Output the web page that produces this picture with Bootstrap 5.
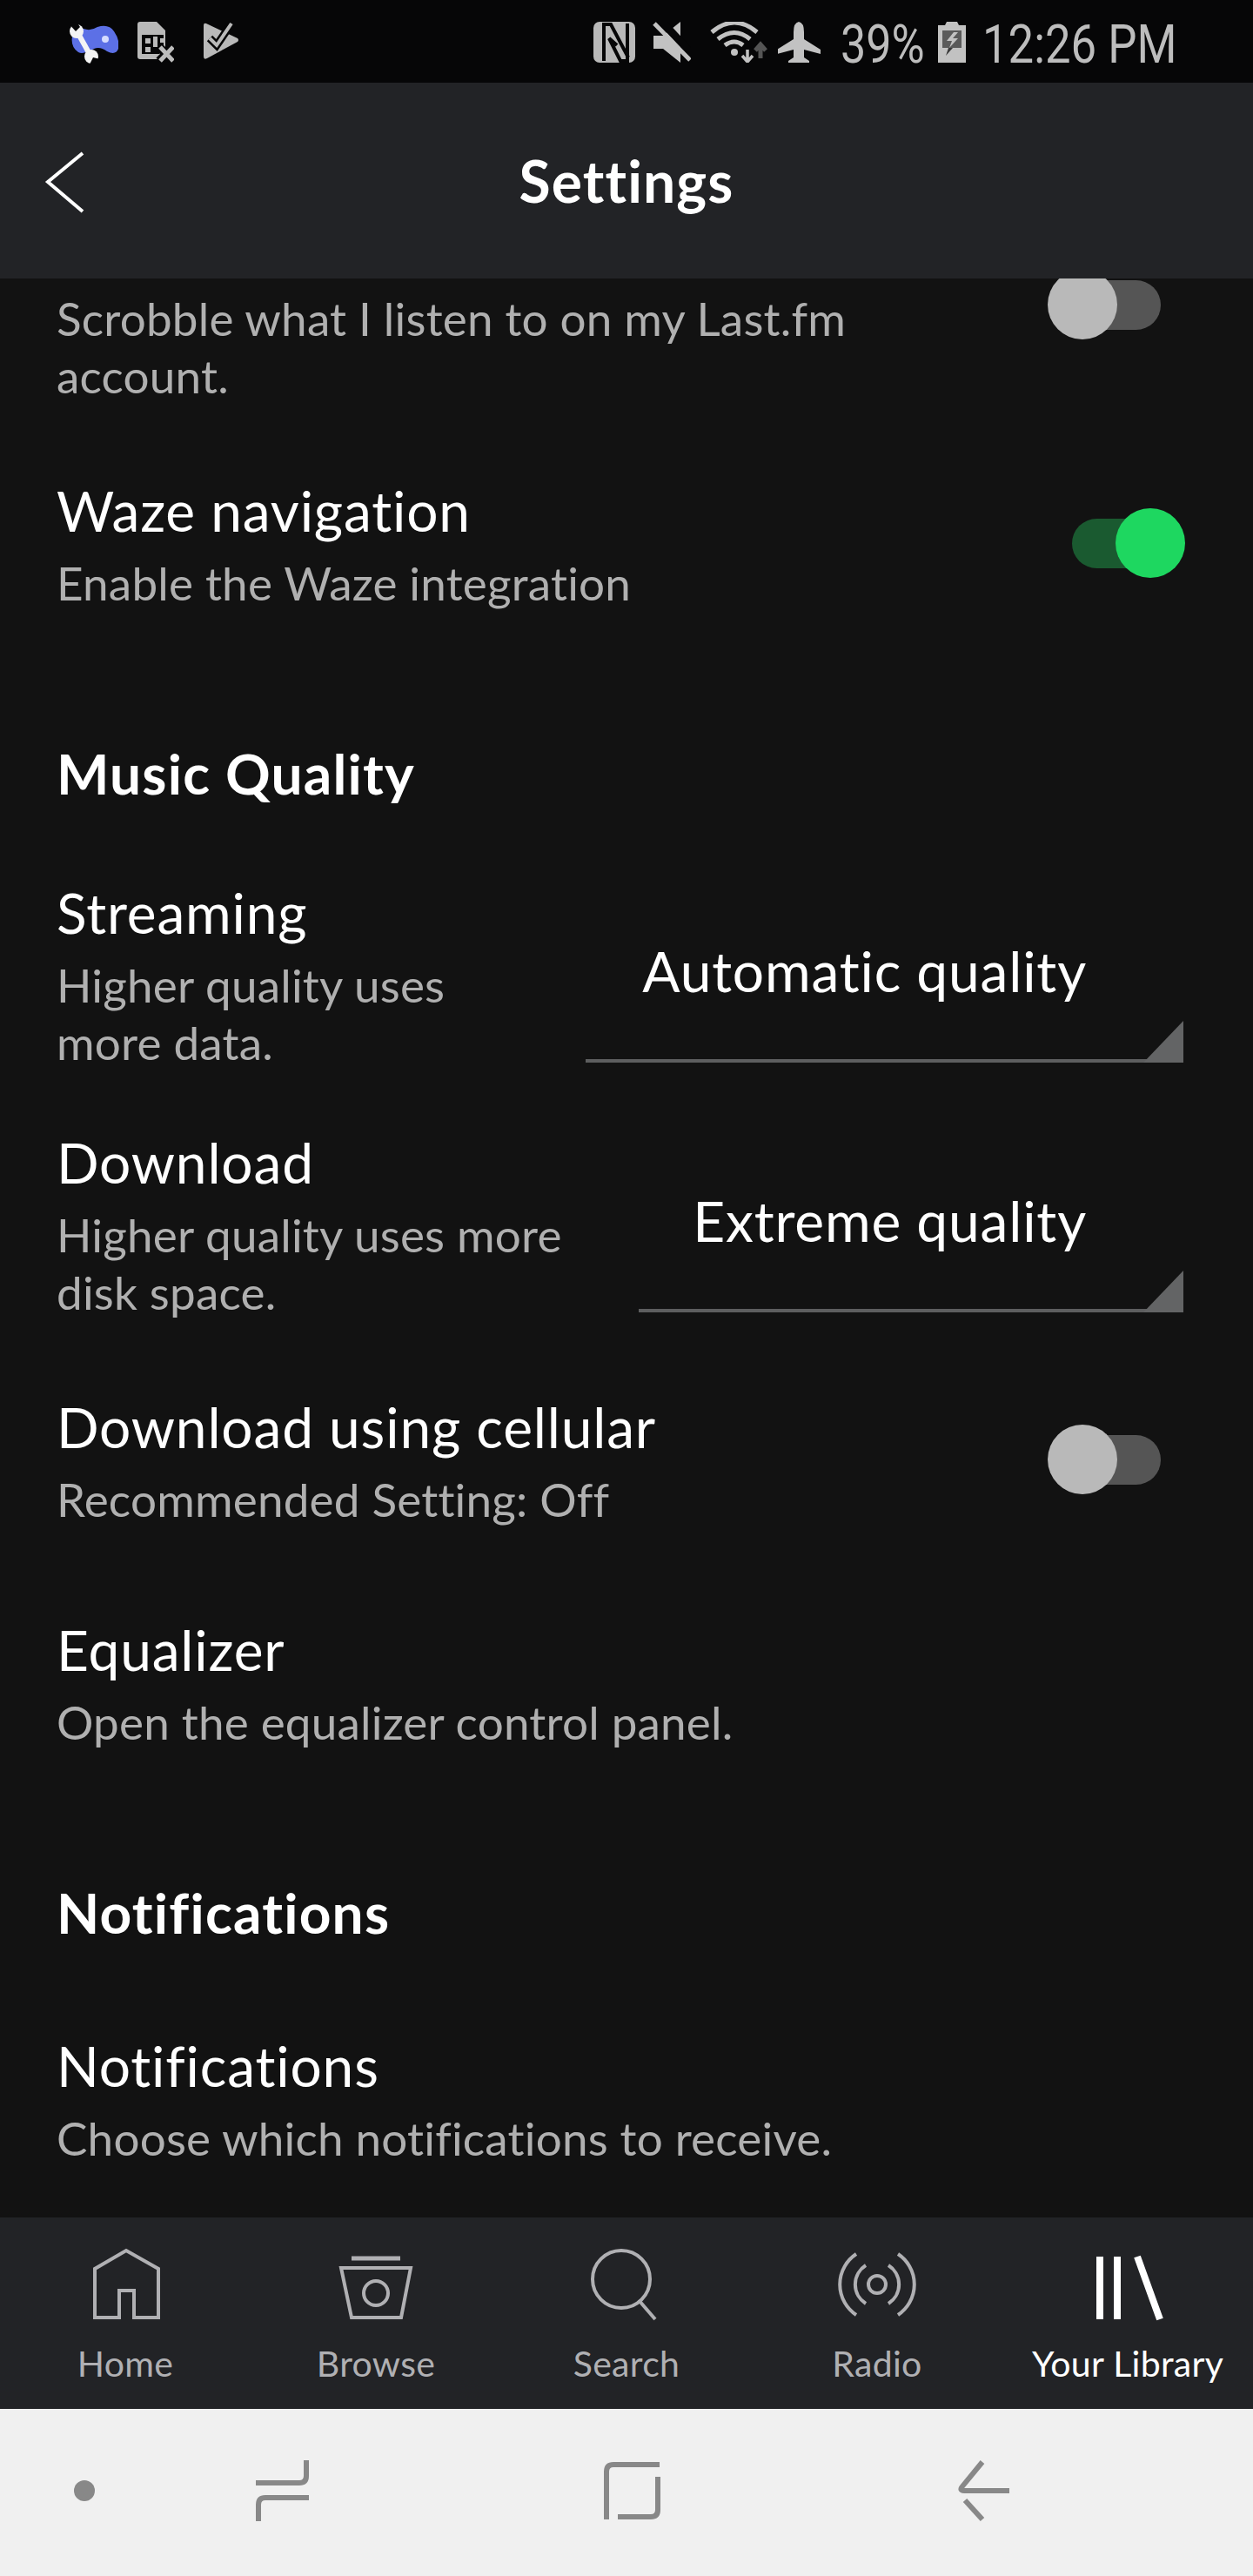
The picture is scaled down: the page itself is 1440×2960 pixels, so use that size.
<!DOCTYPE html>
<html lang="en">
<head>
<meta charset="utf-8">
<title>Settings</title>
<link href="https://cdn.jsdelivr.net/npm/bootstrap@5.3.0/dist/css/bootstrap.min.css" rel="stylesheet">
<style>
html,body{margin:0;background:#121212}
body{font-family:"Lato","Liberation Sans",sans-serif;width:1440px;height:2960px;overflow:hidden;color:#fff}
.phone{width:1440px;height:2960px}
.status-strip{height:95px;background:#060607;color:#bdbdbd;flex:none}
.status-strip svg{display:block;flex:none}
.stat-left{padding:25px 0 0 80px;gap:22px}
.stat-right{padding:25px 91px 0 0}
.ml-11{margin-left:11px}.ml-12{margin-left:12px}.ml-18{margin-left:18px}.ml-19{margin-left:19px}.ml-20{margin-left:20px}.ml-22{margin-left:22px}
.stat-text{font-family:"Roboto",sans-serif;font-weight:400;font-size:62px;line-height:62px;white-space:nowrap;transform-origin:left center;letter-spacing:0}
.stat-pct{width:94px;transform:scaleX(.84);margin-top:-5px}
.stat-time{width:220px;transform:scaleX(.85);margin-top:-5px}
.top-head{height:225px;background:#222326;flex:none;position:relative}
.top-title{font-size:66px;font-weight:700;line-height:1;letter-spacing:1.1px}
.back-ico{position:absolute;left:50px;top:74px}
.scroll-pane{height:2228px;overflow:hidden;background:#121212;padding:13px 80px 0 65px;flex:none}
.item-title{font-size:64px;line-height:100px;color:#fff;letter-spacing:.85px}
.item-desc{font-size:53px;line-height:66px;color:#b0b0b0;letter-spacing:.2px}
.group-head{font-size:64px;font-weight:700;line-height:100px;color:#fff;letter-spacing:1.2px}
.gap72{margin-top:72px}.gap136{margin-top:136px}.gap60{margin-top:60px}.gap55{margin-top:55px}.gap90{margin-top:90px}.gap76{margin-top:76px}
.switch-box{width:130px;height:80px;position:relative;flex:none}
.switch-track{position:absolute;left:30px;top:12px;width:100px;height:57px;border-radius:29px;background:#555}
.switch-knob{position:absolute;left:0;top:0;width:80px;height:80px;border-radius:50%;background:#b9b9b9}
.switch-box.is-on{margin-right:-2px;margin-top:8px}
.switch-box.is-on .switch-track{left:0;background:#1a5a30}
.switch-box.is-on .switch-knob{left:50px;background:#1ed760}
.switch-box.is-off{margin-right:26px}
.switch-clip{margin-top:-23px}
.switch-low{margin-top:8px}
.drop-pick{position:relative;border-bottom:4px solid #5d5e5f;height:174px;padding-right:111px;font-size:64px;line-height:72px;letter-spacing:.85px;text-align:right;flex:none;padding-top:33px}
.drop-pick::after{content:"";position:absolute;right:0;bottom:-4px;width:46px;height:48px;background:#636465;clip-path:polygon(100% 0,100% 100%,0 100%)}
.drop-auto{width:687px}
.drop-extreme{width:626px}
.bottom-tabs{height:220px;background:#222326;flex:none}
.tab-cell{color:#b0b0b3;text-align:center}
.tab-cell svg{display:block;margin:0 auto}
.tab-cell.is-active{color:#fff}
.tab-name{font-size:41px;line-height:50px;white-space:nowrap;margin-top:15px;letter-spacing:.3px}
.sys-bar{height:192px;background:#f0f0f0;flex:none}
.sys-bar svg{display:block}
</style>
</head>
<body>
<div class="phone d-flex flex-column">
  <div class="status-strip d-flex align-items-start justify-content-between">
    <div class="d-flex align-items-start stat-left">
      <svg width="56" height="49" viewBox="80 25 56 49"><path d="M83 42Q84 31 96 33Q104 36 112 31Q125 27 131 36Q138 46 136 56Q133 64 123 59Q115 53 108 56Q96 63 90 60Q81 54 83 42z" fill="#5c70e6"/><circle cx="121" cy="45" r="4" fill="#d5dcff"/><path d="M89 37L104 64" stroke="#f4f4f4" stroke-width="6" fill="none"/><circle cx="88" cy="36" r="8" fill="#f4f4f4"/><circle cx="105" cy="65" r="8" fill="#f4f4f4"/><path d="M78 26l9 10 5-5-4-6z" fill="#060607"/><path d="M103 74l4-8 8 2v6z" fill="#060607"/></svg>
      <svg width="42" height="47" viewBox="158 25 42 47"><path d="M158 28q0-3 3-3h19l10 10v33h-29q-3 0-3-3z" fill="#b9b9b9"/><path d="M163 40h25v14l-5 8h-20z" fill="#060607"/><g fill="#b9b9b9"><rect x="167" y="44" width="6" height="6"/><rect x="176" y="42" width="5" height="12"/><rect x="184" y="44" width="4" height="5"/><rect x="167" y="54" width="6" height="6"/></g><path d="M183 54l16 16M199 54l-16 16" stroke="#060607" stroke-width="10" fill="none"/><path d="M184 54l15 16M199 54l-15 16" stroke="#bdbdbd" stroke-width="5" fill="none"/></svg>
      <svg class="ml-11" width="42" height="44" viewBox="232 27 42 44"><path d="M233 31q0-3 3-2l36 17q2 2 0 4l-35 19q-4 2-4-2z" fill="#b9b9b9"/><path d="M240 46l8 8 17-25" stroke="#060607" stroke-width="9" fill="none"/><path d="M240 46l8 8 17-25" stroke="#b9b9b9" stroke-width="4" fill="none"/></svg>
    </div>
    <div class="d-flex align-items-start stat-right">
      <svg width="48" height="47" viewBox="683 25 48 47"><rect x="683" y="25" width="48" height="47" rx="7" fill="#b9b9b9"/><path d="M695 70V28h8l20 38M722 27v43h-8L701 44l9 8" fill="none" stroke="#060607" stroke-width="4"/></svg>
      <svg class="ml-20" width="44" height="47" viewBox="751 25 44 47"><path d="M752 41h11l20-16v47l-20-16h-11z" fill="#c2c2c2"/><path d="M759 22l39 42" stroke="#060607" stroke-width="9"/><path d="M753 27l41 42" stroke="#c2c2c2" stroke-width="5"/></svg>
      <svg class="ml-22" width="66" height="47" viewBox="817 25 66 47"><g fill="none" stroke="#c2c2c2" stroke-width="5"><path d="M819 37Q845 15 871 37"/><path d="M826 45Q845 30 863 45"/><path d="M834 52Q845 44 855 52"/></g><circle cx="845" cy="60" r="4" fill="#c2c2c2"/><path d="M860 57v13m-6-6 6 7 6-7" stroke="#c2c2c2" stroke-width="3.5" fill="none"/><path d="M875 67V52m-6 6 6-7 6 7" stroke="#555" stroke-width="5" fill="none"/></svg>
      <svg class="ml-12" width="50" height="47" viewBox="894 25 50 47"><path d="M918 25q6 1 6 12v8l19 12v5l-19-5v9l6 4v2h-24v-2l6-4v-9l-19 5v-5l19-12v-8q0-11 6-12z" fill="#c2c2c2"/></svg>
      <div class="stat-text stat-pct ml-22">39%</div>
      <svg class="ml-18" width="32" height="47" viewBox="1078 25 32 47"><path d="M1088 25h12l2 4h8v43h-32V29h8z" fill="#c2c2c2"/><rect x="1083" y="35" width="22" height="20" fill="#5a5a5a"/><path d="M1096 37l-8 10h6l-3 8 10-11h-6l6-7z" fill="#c2c2c2"/><path d="M1095 55l-8 9 3-9z" fill="#3a3a3a"/></svg>
      <div class="stat-text stat-time ml-19">12:26 PM</div>
    </div>
  </div>

  <div class="top-head d-flex align-items-center justify-content-center">
    <svg class="back-ico" width="50" height="76" viewBox="50 169 50 76"><path d="M95 176L55 209l40 34" fill="none" stroke="#fff" stroke-width="4"/></svg>
    <div class="top-title">Settings</div>
  </div>

  <div class="scroll-pane">
    <div class="d-flex justify-content-between align-items-start">
      <div class="item-desc">Scrobble what I listen to on my Last.fm<br>account.</div>
      <div class="switch-box is-off switch-clip"><div class="switch-track"></div><div class="switch-knob"></div></div>
    </div>
    <div class="d-flex justify-content-between align-items-center gap72">
      <div><div class="item-title">Waze navigation</div><div class="item-desc">Enable the Waze integration</div></div>
      <div class="switch-box is-on"><div class="switch-track"></div><div class="switch-knob"></div></div>
    </div>
    <div class="group-head gap136">Music Quality</div>
    <div class="d-flex justify-content-between align-items-start gap60">
      <div><div class="item-title">Streaming</div><div class="item-desc">Higher quality uses<br>more data.</div></div>
      <div class="drop-pick drop-auto mt-5">Automatic quality</div>
    </div>
    <div class="d-flex justify-content-between align-items-start gap55">
      <div><div class="item-title">Download</div><div class="item-desc">Higher quality uses more<br>disk space.</div></div>
      <div class="drop-pick drop-extreme mt-5">Extreme quality</div>
    </div>
    <div class="d-flex justify-content-between align-items-center gap72">
      <div><div class="item-title">Download using cellular</div><div class="item-desc">Recommended Setting: Off</div></div>
      <div class="switch-box is-off switch-low"><div class="switch-track"></div><div class="switch-knob"></div></div>
    </div>
    <div class="gap90"><div class="item-title">Equalizer</div><div class="item-desc">Open the equalizer control panel.</div></div>
    <div class="group-head gap136">Notifications</div>
    <div class="gap76"><div class="item-title">Notifications</div><div class="item-desc">Choose which notifications to receive.</div></div>
  </div>

  <div class="bottom-tabs row g-0 flex-nowrap">
    <div class="col tab-cell">
      <svg width="120" height="128" viewBox="-60 2548 120 128"><path d="M-35 2663v-56l36-21 37 21v56H10v-31h-17v31z" fill="none" stroke="currentColor" stroke-width="4"/></svg>
      <div class="tab-name">Home</div>
    </div>
    <div class="col tab-cell">
      <svg width="120" height="128" viewBox="-60 2548 120 128"><path d="M-28 2595H28" stroke="currentColor" stroke-width="5" fill="none"/><path d="M-40 2606H40L29 2663H-28z" stroke="currentColor" stroke-width="4" fill="none"/><circle cx="0" cy="2635" r="14" stroke="currentColor" stroke-width="4" fill="none"/></svg>
      <div class="tab-name">Browse</div>
    </div>
    <div class="col tab-cell">
      <svg width="120" height="128" viewBox="-60 2548 120 128"><circle cx="-6" cy="2619" r="33" stroke="currentColor" stroke-width="4" fill="none"/><path d="M14 2643L33 2665" stroke="currentColor" stroke-width="4" fill="none"/></svg>
      <div class="tab-name">Search</div>
    </div>
    <div class="col tab-cell">
      <svg width="120" height="128" viewBox="-60 2548 120 128"><circle cx="0" cy="2625" r="10" stroke="currentColor" stroke-width="4" fill="none"/><g stroke="currentColor" stroke-width="4" fill="none"><path d="M-13 2603A26 26 0 0 0-13 2647M13 2603A26 26 0 0 1 13 2647"/><path d="M-24 2590A42 42 0 0 0-24 2660M24 2590A42 42 0 0 1 24 2660"/></g></svg>
      <div class="tab-name">Radio</div>
    </div>
    <div class="col tab-cell is-active">
      <svg width="120" height="128" viewBox="-60 2548 120 128"><path d="M-32 2593v72M-12 2593v72M11 2593l26 72" stroke="currentColor" stroke-width="8" fill="none"/></svg>
      <div class="tab-name">Your Library</div>
    </div>
  </div>

  <div class="sys-bar">
    <svg width="1440" height="192" viewBox="0 2768 1440 192">
      <circle cx="97" cy="2862" r="12" fill="#888"/>
      <g fill="none" stroke="#888" stroke-width="6">
        <path d="M352 2827v18q0 8-8 8h-50"/>
        <path d="M355 2870h-50q-8 0-8 8v19"/>
        <path d="M697 2895v-55q0-8 8-8h53"/>
        <path d="M710 2892h38q8 0 8-8v-38"/>
        <path d="M1160 2862h-52q-6 0-2-5l23-28"/>
        <path d="M1109 2873l20 22"/>
      </g>
    </svg>
  </div>
</div>
</body>
</html>
